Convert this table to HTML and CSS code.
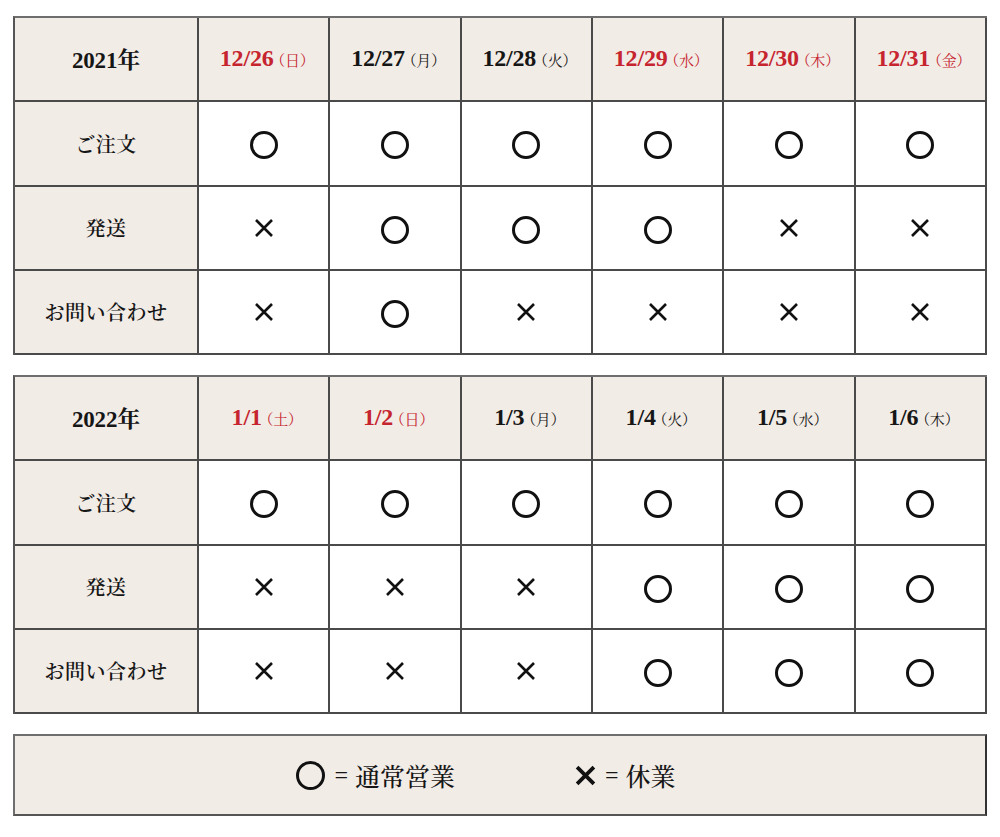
FILE: index.html
```html
<!DOCTYPE html>
<html lang="ja">
<head>
<meta charset="utf-8">
<title>年末年始営業日</title>
<link rel="stylesheet" href="styles.css">
</head>
<body>
<div class="page">
  <div class="tbl">
    <div class="cell head"><span class="yr">2021年</span></div>
    <div class="cell head red"><span class="date">12/26</span><span class="dow">（日）</span></div>
    <div class="cell head"><span class="date">12/27</span><span class="dow">（月）</span></div>
    <div class="cell head"><span class="date">12/28</span><span class="dow">（火）</span></div>
    <div class="cell head red"><span class="date">12/29</span><span class="dow">（水）</span></div>
    <div class="cell head red"><span class="date">12/30</span><span class="dow">（木）</span></div>
    <div class="cell head red"><span class="date">12/31</span><span class="dow">（金）</span></div>

    <div class="cell label">ご注文</div>
    <div class="cell"><span class="mk-o" aria-label="○"></span></div>
    <div class="cell"><span class="mk-o" aria-label="○"></span></div>
    <div class="cell"><span class="mk-o" aria-label="○"></span></div>
    <div class="cell"><span class="mk-o" aria-label="○"></span></div>
    <div class="cell"><span class="mk-o" aria-label="○"></span></div>
    <div class="cell"><span class="mk-o" aria-label="○"></span></div>

    <div class="cell label">発送</div>
    <div class="cell"><svg class="mk-x" viewBox="0 0 20 20" aria-label="×"><path d="M2 2L18 18M18 2L2 18"/></svg></div>
    <div class="cell"><span class="mk-o" aria-label="○"></span></div>
    <div class="cell"><span class="mk-o" aria-label="○"></span></div>
    <div class="cell"><span class="mk-o" aria-label="○"></span></div>
    <div class="cell"><svg class="mk-x" viewBox="0 0 20 20" aria-label="×"><path d="M2 2L18 18M18 2L2 18"/></svg></div>
    <div class="cell"><svg class="mk-x" viewBox="0 0 20 20" aria-label="×"><path d="M2 2L18 18M18 2L2 18"/></svg></div>

    <div class="cell label">お問い合わせ</div>
    <div class="cell"><svg class="mk-x" viewBox="0 0 20 20" aria-label="×"><path d="M2 2L18 18M18 2L2 18"/></svg></div>
    <div class="cell"><span class="mk-o" aria-label="○"></span></div>
    <div class="cell"><svg class="mk-x" viewBox="0 0 20 20" aria-label="×"><path d="M2 2L18 18M18 2L2 18"/></svg></div>
    <div class="cell"><svg class="mk-x" viewBox="0 0 20 20" aria-label="×"><path d="M2 2L18 18M18 2L2 18"/></svg></div>
    <div class="cell"><svg class="mk-x" viewBox="0 0 20 20" aria-label="×"><path d="M2 2L18 18M18 2L2 18"/></svg></div>
    <div class="cell"><svg class="mk-x" viewBox="0 0 20 20" aria-label="×"><path d="M2 2L18 18M18 2L2 18"/></svg></div>
  </div>

  <div class="tbl">
    <div class="cell head"><span class="yr">2022年</span></div>
    <div class="cell head red"><span class="date">1/1</span><span class="dow">（土）</span></div>
    <div class="cell head red"><span class="date">1/2</span><span class="dow">（日）</span></div>
    <div class="cell head"><span class="date">1/3</span><span class="dow">（月）</span></div>
    <div class="cell head"><span class="date">1/4</span><span class="dow">（火）</span></div>
    <div class="cell head"><span class="date">1/5</span><span class="dow">（水）</span></div>
    <div class="cell head"><span class="date">1/6</span><span class="dow">（木）</span></div>

    <div class="cell label">ご注文</div>
    <div class="cell"><span class="mk-o" aria-label="○"></span></div>
    <div class="cell"><span class="mk-o" aria-label="○"></span></div>
    <div class="cell"><span class="mk-o" aria-label="○"></span></div>
    <div class="cell"><span class="mk-o" aria-label="○"></span></div>
    <div class="cell"><span class="mk-o" aria-label="○"></span></div>
    <div class="cell"><span class="mk-o" aria-label="○"></span></div>

    <div class="cell label">発送</div>
    <div class="cell"><svg class="mk-x" viewBox="0 0 20 20" aria-label="×"><path d="M2 2L18 18M18 2L2 18"/></svg></div>
    <div class="cell"><svg class="mk-x" viewBox="0 0 20 20" aria-label="×"><path d="M2 2L18 18M18 2L2 18"/></svg></div>
    <div class="cell"><svg class="mk-x" viewBox="0 0 20 20" aria-label="×"><path d="M2 2L18 18M18 2L2 18"/></svg></div>
    <div class="cell"><span class="mk-o" aria-label="○"></span></div>
    <div class="cell"><span class="mk-o" aria-label="○"></span></div>
    <div class="cell"><span class="mk-o" aria-label="○"></span></div>

    <div class="cell label">お問い合わせ</div>
    <div class="cell"><svg class="mk-x" viewBox="0 0 20 20" aria-label="×"><path d="M2 2L18 18M18 2L2 18"/></svg></div>
    <div class="cell"><svg class="mk-x" viewBox="0 0 20 20" aria-label="×"><path d="M2 2L18 18M18 2L2 18"/></svg></div>
    <div class="cell"><svg class="mk-x" viewBox="0 0 20 20" aria-label="×"><path d="M2 2L18 18M18 2L2 18"/></svg></div>
    <div class="cell"><span class="mk-o" aria-label="○"></span></div>
    <div class="cell"><span class="mk-o" aria-label="○"></span></div>
    <div class="cell"><span class="mk-o" aria-label="○"></span></div>
  </div>

  <div class="legend">
    <div class="leg-item"><span class="mk-o big" aria-label="○"></span><span class="eq">=</span><span class="leg-text">通常営業</span></div>
    <div class="leg-item"><svg class="mk-x big" viewBox="0 0 20 20" aria-label="×"><path d="M2 2L18 18M18 2L2 18"/></svg><span class="eq">=</span><span class="leg-text">休業</span></div>
  </div>
</div>
</body>
</html>
```

FILE: styles.css
```css
* { box-sizing: border-box; }

html, body {
  margin: 0;
  padding: 0;
  background: #ffffff;
}

body {
  font-family: "Liberation Serif", "Noto Serif CJK JP", "Noto Sans CJK JP", serif;
  color: #161616;
}

.page {
  width: 1000px;
  padding: 16px 13px 0 13px;
  display: flex;
  flex-direction: column;
  gap: 20px;
}

.tbl {
  width: 974px;
  display: grid;
  grid-template-columns: 184px repeat(6, 1fr);
  grid-auto-rows: 84.25px;
  border-top: 2px solid #6e6e6e;
  border-left: 2px solid #555;
}

.cell {
  display: flex;
  align-items: center;
  justify-content: center;
  border-right: 2px solid #4a4a4a;
  border-bottom: 2px solid #4a4a4a;
  background: #ffffff;
}

.head, .label {
  background: #f2ece6;
}

.yr {
  font-size: 23px;
  font-weight: 700;
  letter-spacing: -0.2px;
  margin-top: -2px;
}

.date {
  font-size: 24px;
  font-weight: 700;
  letter-spacing: -0.2px;
  margin-top: -2px;
}

.dow {
  font-size: 15px;
  font-feature-settings: "palt";
  margin-left: 4px;
}

.red {
  color: #c6242f;
}

.label {
  font-family: "Noto Serif CJK JP", "Noto Sans CJK JP", serif;
  font-size: 20px;
  font-weight: 600;
  letter-spacing: 0.5px;
}

.mk-o {
  display: block;
  width: 28px;
  height: 28px;
  border: 3px solid #111;
  border-radius: 50%;
  margin-top: 4px;
}

.mk-x {
  display: block;
  width: 20px;
  height: 20px;
  fill: none;
  stroke: #111;
  stroke-width: 2.6;
}

.legend {
  width: 974px;
  height: 82px;
  background: #f2ece6;
  border: 2px solid #6e6e6e;
  border-right-color: #333;
  border-bottom-color: #555;
  display: flex;
  align-items: center;
  justify-content: center;
  gap: 120px;
  padding-right: 28px;
}

.leg-item {
  display: flex;
  align-items: center;
}

.mk-o.big {
  width: 29px;
  height: 29px;
  margin-top: 0;
}

.mk-x.big {
  width: 21px;
  height: 21px;
  stroke-width: 3.6;
}

.eq {
  font-family: "Liberation Serif", serif;
  font-size: 24px;
  margin: 0 7px 0 9px;
}

.leg-text {
  font-family: "Noto Serif CJK JP", "Noto Sans CJK JP", serif;
  font-size: 25px;
  font-weight: 500;
}
```
